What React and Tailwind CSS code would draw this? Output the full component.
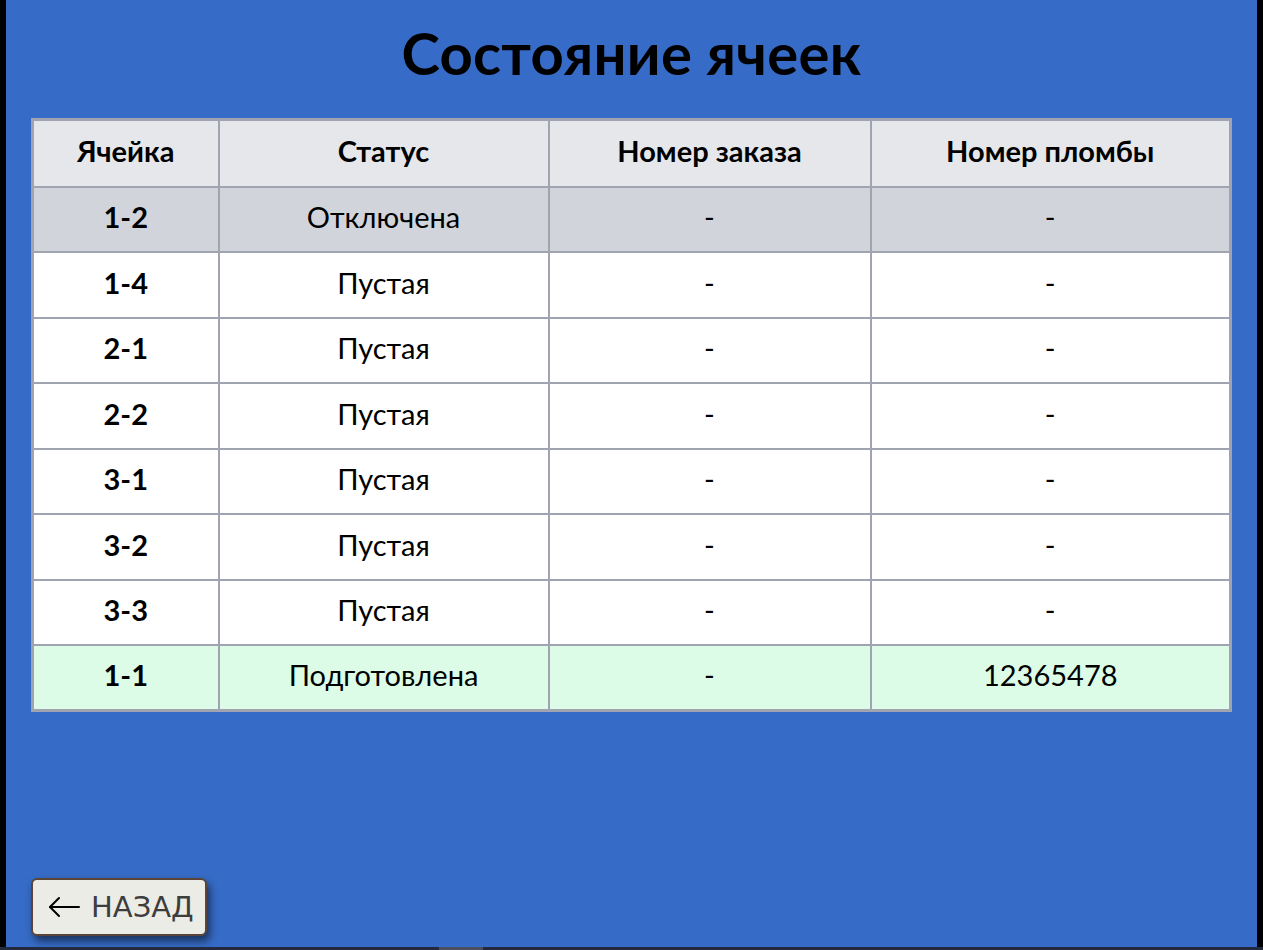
import React from "react";

const rows = [
  { cell: "1-2", status: "Отключена", order: "-", seal: "-", bg: "bg-[#d1d5db]" },
  { cell: "1-4", status: "Пустая", order: "-", seal: "-", bg: "bg-white" },
  { cell: "2-1", status: "Пустая", order: "-", seal: "-", bg: "bg-white" },
  { cell: "2-2", status: "Пустая", order: "-", seal: "-", bg: "bg-white" },
  { cell: "3-1", status: "Пустая", order: "-", seal: "-", bg: "bg-white" },
  { cell: "3-2", status: "Пустая", order: "-", seal: "-", bg: "bg-white" },
  { cell: "3-3", status: "Пустая", order: "-", seal: "-", bg: "bg-white" },
  { cell: "1-1", status: "Подготовлена", order: "-", seal: "12365478", bg: "bg-[#dcfce7]" },
];

export default function App() {
  return (
    <div className="h-[950px] w-[1263px] flex flex-col overflow-hidden" style={{ fontFamily: "Lato, 'Noto Sans', sans-serif" }}>
      <div className="flex flex-1 min-h-0">
        <div className="w-[6px] bg-black" />
        <main className="flex-1 bg-[#366cc7] flex flex-col px-[25px]">
          <h1 className="text-center text-[58px] font-bold text-black leading-none mt-[24px] mb-[36px] tracking-[0.3px]">
            Состояние ячеек
          </h1>
          <table className="w-full border-collapse border-[3px] border-[#a0a4b0] text-[29px] text-black table-fixed">
            <colgroup>
              <col className="w-[186px]" />
              <col className="w-[330px]" />
              <col className="w-[322px]" />
              <col />
            </colgroup>
            <thead>
              <tr className="bg-[#e5e7eb] h-[67px]">
                {["Ячейка", "Статус", "Номер заказа", "Номер пломбы"].map((h) => (
                  <th key={h} className="border-2 border-[#a0a4b0] font-bold text-center align-middle pb-[5px]">
                    {h}
                  </th>
                ))}
              </tr>
            </thead>
            <tbody>
              {rows.map((r) => (
                <tr key={r.cell} className={`${r.bg} h-[65.5px]`}>
                  <td className="border-2 border-[#a0a4b0] font-bold text-center pb-[5px]">{r.cell}</td>
                  <td className="border-2 border-[#a0a4b0] text-center pb-[5px]">{r.status}</td>
                  <td className="border-2 border-[#a0a4b0] text-center pb-[5px]">{r.order}</td>
                  <td className="border-2 border-[#a0a4b0] text-center pb-[5px]">{r.seal}</td>
                </tr>
              ))}
            </tbody>
          </table>
          <div className="flex-1" />
          <div className="mb-[11px]">
            <button
              className="h-[58px] w-[176px] flex items-center pl-[15px] gap-[11px] rounded-[6px] border-2 border-[#5a4538] bg-[#ececE6] text-[#3d3d3d] text-[29px] shadow-[3px_5px_8px_rgba(0,0,0,0.55)]"
              style={{ fontFamily: "'DejaVu Sans', sans-serif" }}
            >
              <svg width="32" height="22" viewBox="0 0 32 22" fill="none" stroke="black" strokeWidth="2" strokeLinecap="round" strokeLinejoin="round">
                <path d="M2 11 H31" />
                <path d="M11 2 L2 11 L11 20" />
              </svg>
              <span className="leading-none">НАЗАД</span>
            </button>
          </div>
        </main>
        <div className="w-[6px] bg-black" />
      </div>
      <div className="h-[3px] bg-[#232a3f] flex">
        <div className="w-[439px]" />
        <div className="w-[44px] bg-[#4a5060]" />
      </div>
    </div>
  );
}
